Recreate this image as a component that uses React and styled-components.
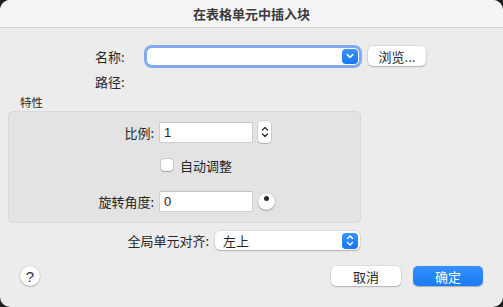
import React from "react"
import styled, { createGlobalStyle } from "styled-components"

const GlobalStyle = createGlobalStyle`
  html, body {
    margin: 0;
    padding: 0;
    background: #1e1e1e;
  }
  body {
    font-family: "Noto Sans CJK SC", "Noto Sans", sans-serif;
    color: #262626;
    -webkit-font-smoothing: antialiased;
  }
`

const Window = styled.div`
  width: 503px;
  height: 307px;
  background: #ececec;
  border-radius: 10px;
  overflow: hidden;
  display: flex;
  flex-direction: column;
`

const TitleBar = styled.div`
  height: 28px;
  flex: none;
  background: #f6f4f6;
  border-bottom: 1px solid #d2d2d2;
  box-sizing: border-box;
  display: flex;
  align-items: center;
  justify-content: center;
  font-size: 13px;
  font-weight: 700;
  color: #3a3a3a;
`

const Body = styled.div`
  flex: 1;
  display: flex;
  flex-direction: column;
  padding: 0 8px;
`

const TopRow = styled.div`
  display: flex;
  align-items: center;
  height: ${(p) => p.$h}px;
  margin-top: ${(p) => p.$mt || 0}px;
  padding-left: ${(p) => p.$pl || 0}px;
`

const Label = styled.div`
  font-size: 13px;
  width: ${(p) => p.$w}px;
  text-align: ${(p) => p.$align || "left"};
  flex: none;
  white-space: nowrap;
`

const Combo = styled.div`
  width: 211px;
  height: 17px;
  margin-left: ${(p) => p.$ml}px;
  background: #fff;
  border-radius: 5px;
  box-shadow: 0 0 0 3px #82aaf0;
  display: flex;
  align-items: center;
  justify-content: flex-end;
  padding-right: 1px;
`

const BlueKnob = styled.div`
  width: 16px;
  height: ${(p) => p.$h}px;
  border-radius: 4px;
  background: linear-gradient(#3b93fc, #1577f4);
  display: flex;
  align-items: center;
  justify-content: center;
`

const PushButton = styled.div`
  width: ${(p) => p.$w}px;
  height: 20px;
  margin-left: ${(p) => p.$ml || 0}px;
  border-radius: 5px;
  background: ${(p) => (p.$primary ? "linear-gradient(#3590fb, #1a7bf6)" : "#fff")};
  color: ${(p) => (p.$primary ? "#fff" : "#262626")};
  box-shadow: ${(p) =>
    p.$primary
      ? "0 0.5px 1px rgba(0,0,0,0.25)"
      : "0 0 0 0.5px rgba(0,0,0,0.12), 0 1px 1.5px rgba(0,0,0,0.2)"};
  font-size: 13px;
  display: flex;
  align-items: center;
  justify-content: center;
`

const GroupTitle = styled.div`
  font-size: 11.5px;
  margin: 4px 0 0 12px;
  height: 16px;
  line-height: 16px;
`

const GroupBox = styled.div`
  width: 353px;
  height: 112px;
  box-sizing: border-box;
  margin-top: 1px;
  background: #e3e3e3;
  border: 1px solid #d8d8d8;
  border-radius: 5px;
  display: flex;
  flex-direction: column;
`

const GroupRow = styled.div`
  display: flex;
  align-items: center;
  height: 22px;
  margin-top: ${(p) => p.$mt}px;
`

const Field = styled.div`
  width: 94px;
  height: 21px;
  box-sizing: border-box;
  margin-left: 5px;
  background: #fff;
  border: 1px solid #cfcfcf;
  border-top-color: #c4c4c4;
  font-size: 13px;
  padding-left: 4px;
  display: flex;
  align-items: center;
  font-family: "Liberation Sans", "Noto Sans", sans-serif;
`

const Stepper = styled.div`
  width: 13px;
  height: 22px;
  margin-left: 5px;
  background: #fff;
  border-radius: 4px;
  box-shadow: 0 0 0 0.5px rgba(0,0,0,0.15), 0 1px 1px rgba(0,0,0,0.15);
  display: flex;
  align-items: center;
  justify-content: center;
`

const Dial = styled.div`
  width: 17px;
  height: 17px;
  margin-left: 5px;
  border-radius: 50%;
  background: #fff;
  box-shadow: 0 0 0 0.5px rgba(0,0,0,0.15), 0 1px 1.5px rgba(0,0,0,0.25);
  display: flex;
  justify-content: center;
`

const DialDot = styled.div`
  width: 5px;
  height: 5px;
  margin-top: 3px;
  border-radius: 50%;
  background: #2a2a2a;
`

const CheckBox = styled.div`
  width: 12px;
  height: 12px;
  margin-left: 152px;
  background: #fff;
  border-radius: 3px;
  box-shadow: 0 0 0 0.5px rgba(0,0,0,0.2), 0 0.5px 1px rgba(0,0,0,0.2);
`

const CheckLabel = styled.div`
  font-size: 13px;
  margin-left: 7px;
`

const Popup = styled.div`
  width: 135px;
  height: 19px;
  margin-left: 6px;
  background: #fff;
  border-radius: 5px;
  box-shadow: 0 0 0 0.5px rgba(0,0,0,0.12), 0 1px 1.5px rgba(0,0,0,0.2);
  display: flex;
  align-items: center;
  justify-content: space-between;
  padding: 0 2px 0 8px;
  font-size: 13px;
`

const BottomRow = styled.div`
  display: flex;
  align-items: center;
  margin-top: 16px;
  padding: 0 12px;
`

const HelpButton = styled.div`
  width: 20px;
  height: 20px;
  border-radius: 50%;
  background: #fff;
  box-shadow: 0 0 0 0.5px rgba(0,0,0,0.12), 0 1px 1.5px rgba(0,0,0,0.22);
  display: flex;
  align-items: center;
  justify-content: center;
  font-family: "Liberation Sans", sans-serif;
  font-size: 15px;
  color: #333;
`

const Spacer = styled.div`
  flex: 1;
`

const ChevronDown = () => (
  <svg width="8" height="6" viewBox="0 0 8 6">
    <path d="M1.2 1.6 L4 4.4 L6.8 1.6" fill="none" stroke="#fff" strokeWidth="1.5" strokeLinecap="round" strokeLinejoin="round" />
  </svg>
)

const UpDown = ({ color = "#fff", w = 8, h = 13 }) => (
  <svg width={w} height={h} viewBox="0 0 8 13">
    <path d="M1.5 4.5 L4 2 L6.5 4.5 M1.5 8.5 L4 11 L6.5 8.5" fill="none" stroke={color} strokeWidth="1.4" strokeLinecap="round" strokeLinejoin="round" />
  </svg>
)

export default function App() {
  return (
    <>
      <GlobalStyle />
      <Window>
        <TitleBar>在表格单元中插入块</TitleBar>
        <Body>
          <TopRow $h={22} $mt={17} $pl={87}>
            <Label $w={41}>名称:</Label>
            <Combo $ml={11}>
              <BlueKnob $h={15}>
                <ChevronDown />
              </BlueKnob>
            </Combo>
            <PushButton $w={58} $ml={9}>浏览...</PushButton>
          </TopRow>
          <TopRow $h={18} $mt={5} $pl={87}>
            <Label $w={41}>路径:</Label>
          </TopRow>
          <GroupTitle>特性</GroupTitle>
          <GroupBox>
            <GroupRow $mt={9}>
              <Label $w={145} $align="right">比例:</Label>
              <Field>1</Field>
              <Stepper>
                <UpDown color="#333" w={8} h={14} />
              </Stepper>
            </GroupRow>
            <GroupRow $mt={11}>
              <CheckBox />
              <CheckLabel>自动调整</CheckLabel>
            </GroupRow>
            <GroupRow $mt={14}>
              <Label $w={145} $align="right">旋转角度:</Label>
              <Field>0</Field>
              <Dial>
                <DialDot />
              </Dial>
            </GroupRow>
          </GroupBox>
          <TopRow $h={19} $mt={8} $pl={117}>
            <Label $w={84} $align="right">全局单元对齐:</Label>
            <Popup>
              左上
              <BlueKnob $h={16}>
                <UpDown />
              </BlueKnob>
            </Popup>
          </TopRow>
          <BottomRow>
            <HelpButton>?</HelpButton>
            <Spacer />
            <PushButton $w={70}>取消</PushButton>
            <PushButton $w={70} $ml={12} $primary>
              确定
            </PushButton>
          </BottomRow>
        </Body>
      </Window>
    </>
  )
}
